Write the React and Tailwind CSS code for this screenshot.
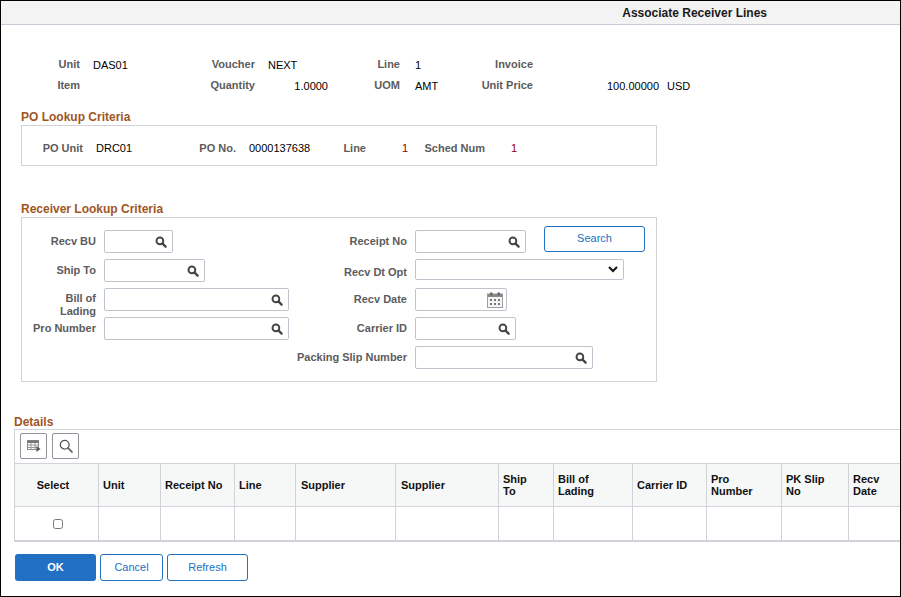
import React from 'react';

const font = { fontFamily: '"Liberation Sans", Arial, sans-serif' };

const SearchIcon = () => (
    <svg width="12" height="12" viewBox="0 0 12 12" fill="none" stroke="#444" className="shrink-0">
        <circle cx="4.9" cy="4.9" r="3.4" strokeWidth="1.9" />
        <path d="M7.6 7.6L10.6 10.6" strokeWidth="2.3" strokeLinecap="round" />
    </svg>
);

const CalendarIcon = () => (
    <svg width="16" height="16" viewBox="0 0 16 16" className="shrink-0">
        <rect x="0.5" y="2" width="15" height="13.5" fill="#f4f4f4" stroke="#a0a0a0" />
        <rect x="0.5" y="2" width="15" height="3" fill="#8a8a8a" />
        <rect x="3" y="0.5" width="2.5" height="3" fill="#666" />
        <rect x="10.5" y="0.5" width="2.5" height="3" fill="#666" />
        <path d="M3 7h2v2H3zM7 7h2v2H7zM11 7h2v2h-2zM3 11h2v2H3zM7 11h2v2H7zM11 11h2v2h-2z" fill="#777" />
    </svg>
);

const Label = ({ children, className = '' }) => (
    <div className={`font-bold text-[11px] leading-[13px] text-[#5c5c5c] text-right ${className}`}>{children}</div>
);

const Value = ({ children, className = '', color = 'text-black' }) => (
    <div className={`text-[11px] leading-[13px] ${color} ${className}`}>{children}</div>
);

const Heading = ({ children, className = '' }) => (
    <h2 className={`font-bold text-[12px] leading-[14px] text-[#a0561f] ${className}`}>{children}</h2>
);

const LookupInput = ({ width, icon }) => (
    <div className={`${width} h-[23px] shrink-0 flex items-center ${icon === 'calendar' ? 'justify-end pr-[3px]' : 'justify-end pr-[5px]'} bg-white border border-[#bfc4cc] rounded-[2px]`}>
        {icon === 'calendar' ? <CalendarIcon /> : <SearchIcon />}
    </div>
);

const FieldRow = ({ label, labelWidth, width, icon, className = '' }) => (
    <div className={`flex items-center h-[23px] ${className}`}>
        <Label className={labelWidth}>{label}</Label>
        <div className="w-[8px] shrink-0" />
        <LookupInput width={width} icon={icon} />
    </div>
);

const columns = [
    { name: 'Select', className: 'justify-center pr-[7px]' },
    { name: 'Unit', className: 'pl-[4px]' },
    { name: 'Receipt No', className: 'pl-[4px]' },
    { name: 'Line', className: 'pl-[4px]' },
    { name: 'Supplier', className: 'pl-[5px]' },
    { name: 'Supplier', className: 'pl-[5px]' },
    { name: 'Ship To', className: 'pl-[4px] pr-[20px]' },
    { name: 'Bill of Lading', className: 'pl-[4px] pr-[20px]' },
    { name: 'Carrier ID', className: 'pl-[4px]' },
    { name: 'Pro Number', className: 'pl-[4px] pr-[20px]' },
    { name: 'PK Slip No', className: 'pl-[4px] pr-[10px]' },
    { name: 'Recv Date', className: 'pl-[4px] pr-[10px]' },
];

const gridCols = 'grid grid-cols-[84px_62px_74px_61px_100px_103px_55px_79px_74px_75px_67px_1fr]';

const App = () => {
    return (
        <div style={font} className="w-[901px] h-[597px] bg-white border border-black overflow-hidden">
            {/* title bar */}
            <div className="h-[24px] bg-[#f3f3f3] border-b border-[#c6ccd6] flex justify-end items-center pr-[133px]">
                <span className="font-bold text-[12px] text-[#1a1a1a] leading-[24px]">Associate Receiver Lines</span>
            </div>

            {/* voucher info */}
            <div className="pt-[33px] grid grid-cols-[79px_120px_55px_73px_72px_60px_73px_126px_60px] grid-rows-[13px_13px] gap-y-[8px] items-center">
                <Label>Unit</Label>
                <Value className="pl-[13px] translate-y-px">DAS01</Value>
                <Label>Voucher</Label>
                <Value className="pl-[13px] translate-y-px">NEXT</Value>
                <Label>Line</Label>
                <Value className="pl-[15px] translate-y-px">1</Value>
                <Label>Invoice</Label>
                <div />
                <div />
                <Label>Item</Label>
                <div />
                <Label>Quantity</Label>
                <Value className="text-right translate-y-px">1.0000</Value>
                <Label>UOM</Label>
                <Value className="pl-[15px] translate-y-px">AMT</Value>
                <Label>Unit Price</Label>
                <Value className="text-right translate-y-px">100.00000</Value>
                <Value className="pl-[8px] translate-y-px">USD</Value>
            </div>

            {/* po lookup */}
            <Heading className="ml-[20px] mt-[18px]">PO Lookup Criteria</Heading>
            <div className="ml-[20px] mt-[1px] w-[636px] h-[41px] border border-[#d0d3da] pt-[6px] flex items-center">
                <Label className="w-[61px]">PO Unit</Label>
                <Value className="ml-[13px] w-[60px]">DRC01</Value>
                <Label className="w-[80px]">PO No.</Label>
                <Value className="ml-[13px] w-[61px]">0000137638</Value>
                <Label className="w-[56px]">Line</Label>
                <Value className="w-[42px] text-right" color="text-[#8b0000]">1</Value>
                <Label className="w-[77px]">Sched Num</Label>
                <Value className="w-[32px] text-right" color="text-[#8b0000]">1</Value>
            </div>

            {/* receiver lookup */}
            <Heading className="ml-[20px] mt-[36px]">Receiver Lookup Criteria</Heading>
            <div className="ml-[20px] mt-[1px] w-[636px] h-[165px] border border-[#d0d3da] pt-[12px] flex">
                <div className="w-[267px] shrink-0 flex flex-col gap-[6px]">
                    <FieldRow label="Recv BU" labelWidth="w-[74px]" width="w-[69px]" />
                    <FieldRow label="Ship To" labelWidth="w-[74px]" width="w-[101px]" />
                    <div className="flex items-center h-[23px]">
                        <Label className="w-[74px] pt-[11px] leading-[12px]">Bill of<br />Lading</Label>
                        <div className="w-[8px] shrink-0" />
                        <LookupInput width="w-[185px]" />
                    </div>
                    <FieldRow label="Pro Number" labelWidth="w-[74px]" width="w-[185px]" />
                </div>
                <div className="flex flex-col gap-[6px]">
                    <div className="flex items-start h-[23px]">
                        <Label className="w-[118px] mt-[5px]">Receipt No</Label>
                        <div className="w-[8px] shrink-0" />
                        <LookupInput width="w-[111px]" />
                        <button className="ml-[18px] -mt-[4px] w-[101px] h-[26px] bg-white border border-[#2270c4] rounded-[3px] text-[11px] text-[#2270c4] leading-none pb-[1px]">Search</button>
                    </div>
                    <div className="flex items-center h-[23px]">
                        <Label className="w-[118px] mt-[4px]">Recv Dt Opt</Label>
                        <div className="w-[8px] shrink-0" />
                        <div className="w-[209px] h-[21px] mb-[2px] flex items-center justify-end pr-[5px] border border-[#bfc4cc] rounded-[2px]">
                            <svg width="10" height="7" viewBox="0 0 10 7" fill="none" stroke="#111" strokeWidth="2"><path d="M1 1l4 4 4-4" /></svg>
                        </div>
                    </div>
                    <FieldRow label="Recv Date" labelWidth="w-[118px]" width="w-[92px]" icon="calendar" />
                    <FieldRow label="Carrier ID" labelWidth="w-[118px]" width="w-[101px]" />
                    <FieldRow label="Packing Slip Number" labelWidth="w-[118px]" width="w-[178px]" />
                </div>
            </div>

            {/* details grid */}
            <Heading className="ml-[13px] mt-[33px]">Details</Heading>
            <div className="ml-[13px] border-t border-l border-[#d0d3da]">
                <div className="h-[33px] flex items-center gap-[5px] pl-[5px] pb-[1px]">
                    <button className="w-[27px] h-[26px] flex items-center justify-center bg-white border border-[#8f949b] rounded-[2px]">
                        <svg width="14" height="13" viewBox="0 0 14 13">
                            <rect x="0.5" y="0.5" width="11" height="9" fill="#fff" stroke="#8a8a8a" />
                            <rect x="0.5" y="0.5" width="11" height="2.5" fill="#777" />
                            <path d="M0.5 5h11M0.5 7.5h11M4 3v6.5M8 3v6.5" stroke="#999" />
                            <path d="M9.5 6l4 3-4 3z" fill="#555" />
                        </svg>
                    </button>
                    <button className="w-[27px] h-[26px] flex items-center justify-center bg-white border border-[#8f949b] rounded-[2px]">
                        <svg width="14" height="14" viewBox="0 0 14 14" fill="none" stroke="#555">
                            <circle cx="5.7" cy="5.7" r="4.4" strokeWidth="1.3" />
                            <path d="M9 9l4 4" strokeWidth="1.7" strokeLinecap="round" />
                        </svg>
                    </button>
                </div>
                <div className={`${gridCols} h-[44px] bg-[#f6f7f7] border-t border-b border-[#d0d3da]`}>
                    {columns.map((col, i) => (
                        <div
                            key={i}
                            className={`flex items-center text-[11px] leading-[12px] font-bold text-[#111] border-r border-[#d0d3da] last:border-r-0 ${col.className}`}
                        >
                            <span>{col.name}</span>
                        </div>
                    ))}
                </div>
                <div className={`${gridCols} h-[35px] border-b-2 border-[#d0d3da]`}>
                    {columns.map((col, i) => (
                        <div key={i} className="flex items-center justify-center border-r border-[#d0d3da] last:border-r-0">
                            {i === 0 && <input type="checkbox" className="w-[10px] h-[10px] m-0 ml-[2px]" />}
                        </div>
                    ))}
                </div>
            </div>

            {/* footer buttons */}
            <div className="ml-[14px] mt-[12px] flex gap-[4px]">
                <button className="w-[81px] h-[27px] bg-[#2270c4] rounded-[3px] text-[11px] font-bold text-white">OK</button>
                <button className="w-[63px] h-[27px] bg-white border border-[#2270c4] rounded-[3px] text-[11px] text-[#2270c4]">Cancel</button>
                <button className="w-[81px] h-[27px] bg-white border border-[#2270c4] rounded-[3px] text-[11px] text-[#2270c4]">Refresh</button>
            </div>
        </div>
    );
};

export default App;
